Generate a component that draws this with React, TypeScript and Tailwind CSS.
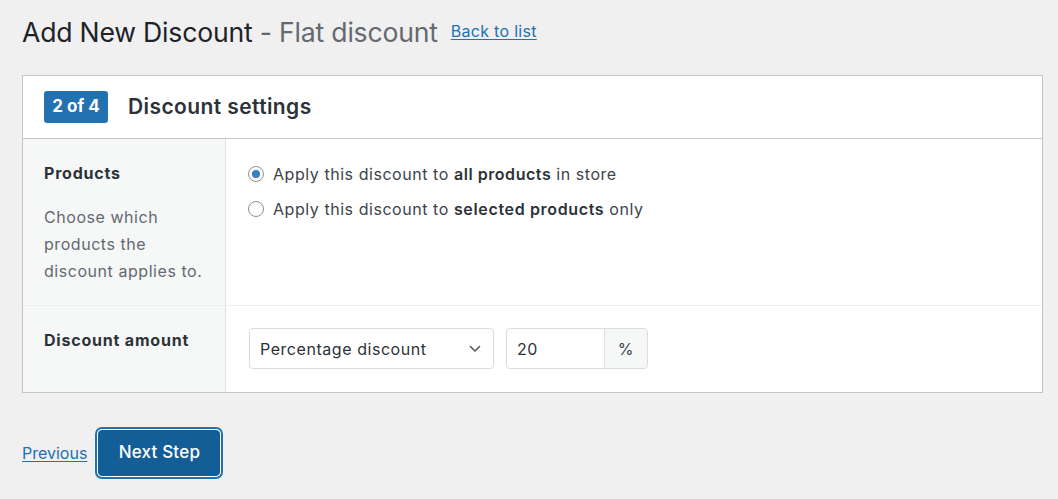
import React from "react";

export default function App() {
  return (
    <div
      className="min-h-[499px] w-full bg-[#f0f0f1] pl-[22px] pr-[15px] pt-[14px] text-[#3c434a]"
      style={{ fontFamily: "Inter, 'Noto Sans', sans-serif" }}
    >
      <div className="flex items-center">
        <h1 className="text-[26.6px] leading-[36px] font-normal tracking-[-0.2px] text-[#1d2327]">
          Add New Discount <span className="text-[#646970]">- Flat discount</span>
        </h1>
        <a href="#" className="ml-[13px] -mt-[2px] text-[16px] leading-[24px] tracking-[0.3px] text-[#2271b1] underline underline-offset-2">
          Back to list
        </a>
      </div>

      <div className="mt-[25px] border border-[#c3c4c7] bg-white">
        <div className="flex h-[63px] items-center border-b border-[#c3c4c7] pl-[21px]">
          <span className="flex h-[32px] w-[64px] items-center justify-center rounded-[3px] bg-[#2271b1] text-[17px] font-bold text-white">
            2 of 4
          </span>
          <span className="ml-[20px] text-[21px] font-semibold tracking-[0.4px] text-[#2c3338]">Discount settings</span>
        </div>

        <div className="flex border-b border-[#f0f0f1] tracking-[0.55px]">
          <div className="w-[203px] shrink-0 border-r border-[#e0e0e0] bg-[#f6f7f7] pl-[21px] pr-[20px] pt-[22px] pb-[20px]">
            <div className="text-[16px] leading-[24px] font-bold tracking-[0.8px] text-[#2c3338]">Products</div>
            <p className="mt-[19px] text-[16px] leading-[27px] text-[#646970]">
              Choose which products the discount applies to.
            </p>
          </div>
          <div className="flex flex-col gap-[11px] pl-[22px] pt-[23px] text-[16px] leading-[24px] text-[#3c434a]">
            <label className="flex items-center gap-[9px]">
              <span className="flex h-[16px] w-[16px] items-center justify-center rounded-full border border-[#8c8f94] bg-white">
                <span className="h-[8px] w-[8px] rounded-full bg-[#3582c4]" />
              </span>
              <span>
                Apply this discount to <b className="font-semibold text-[#2c3338]">all products</b> in store
              </span>
            </label>
            <label className="flex items-center gap-[9px]">
              <span className="h-[16px] w-[16px] rounded-full border border-[#8c8f94] bg-white" />
              <span>
                Apply this discount to <b className="font-semibold tracking-[0.65px] text-[#2c3338]">selected products</b> only
              </span>
            </label>
          </div>
        </div>

        <div className="flex tracking-[0.55px]">
          <div className="w-[203px] shrink-0 border-r border-[#e0e0e0] bg-[#f6f7f7] pl-[21px] pt-[22px] pb-[20px]">
            <div className="text-[16px] leading-[24px] font-bold tracking-[0.8px] text-[#2c3338]">Discount amount</div>
          </div>
          <div className="flex items-start gap-[12px] pl-[23px] pt-[22px] pb-[23px]">
            <div className="flex h-[41px] w-[245px] items-center justify-between rounded-[4px] border border-[#dcdcde] bg-white pl-[10px] pr-[12px] text-[16px] text-[#2c3338]">
              <span>Percentage discount</span>
              <svg width="12" height="8" viewBox="0 0 12 8" fill="none">
                <path d="M1.5 1.5L6 6L10.5 1.5" stroke="#50575e" strokeWidth="1.6" strokeLinecap="round" strokeLinejoin="round" />
              </svg>
            </div>
            <div className="flex h-[41px] w-[142px] overflow-hidden rounded-[4px] border border-[#dcdcde] bg-white text-[16px] text-[#2c3338]">
              <span className="flex flex-1 items-center pl-[10px]">20</span>
              <span className="flex w-[43px] items-center justify-center border-l border-[#dcdcde] bg-[#f6f7f7] text-[#3c434a]">
                %
              </span>
            </div>
          </div>
        </div>
      </div>

      <div className="mt-[37px] flex items-center">
        <a href="#" className="text-[16px] text-[#2271b1] underline underline-offset-2">
          Previous
        </a>
        <button className="ml-[11px] h-[46px] w-[122px] rounded-[4px] border border-[#135e96] bg-[#135e96] text-[17px] font-medium tracking-[0.2px] text-white shadow-[0_0_0_1px_#fff,0_0_0_3px_#2271b1]">
          Next Step
        </button>
      </div>
    </div>
  );
}
